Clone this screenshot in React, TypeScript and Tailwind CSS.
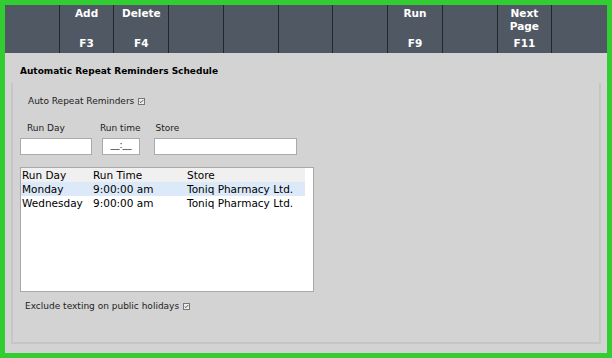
const keys = [
  { label: "", key: "" },
  { label: "Add", key: "F3" },
  { label: "Delete", key: "F4" },
  { label: "", key: "" },
  { label: "", key: "" },
  { label: "", key: "" },
  { label: "", key: "" },
  { label: "Run", key: "F9" },
  { label: "", key: "" },
  { label: "Next Page", key: "F11" },
  { label: "", key: "" },
];

const rows = [
  { day: "Monday", time: "9:00:00 am", store: "Toniq Pharmacy Ltd.", selected: true },
  { day: "Wednesday", time: "9:00:00 am", store: "Toniq Pharmacy Ltd.", selected: false },
];

function Tick() {
  return (
    <span className="ml-1 inline-flex h-[7px] w-[7px] items-center justify-center border border-[#777] bg-[#eee] align-middle">
      <svg viewBox="0 0 7 7" className="h-[5px] w-[5px]">
        <path d="M1 3.5l1.5 1.5L6 1.5" fill="none" stroke="#333" strokeWidth={1.2} />
      </svg>
    </span>
  );
}

export default function App() {
  return (
    <div
      className="h-[358px] w-[612px] bg-[#32cd32] p-[5px]"
      style={{ fontFamily: '"DejaVu Sans", Verdana, sans-serif' }}
    >
      <div className="flex h-full flex-col bg-[#d3d3d3]">
        {/* function key bar */}
        <div className="grid h-[48px] grid-cols-11 bg-[#4f5863]">
          {keys.map((k, i) => (
            <div
              key={i}
              className="flex flex-col items-center justify-between border-r border-[#22272d] pb-[3px] pt-[2px] text-[10.5px] font-bold leading-[13px] text-white last:border-r-0"
            >
              <span className="w-[40px] text-center">{k.label}</span>
              <span>{k.key}</span>
            </div>
          ))}
        </div>

        <div className="flex flex-1 flex-col px-[6px] pb-[9px] pt-[12px]">
          <div className="pl-[9px] text-[9px] font-bold text-black">
            Automatic Repeat Reminders Schedule
          </div>
          <div className="mt-[4px] flex flex-1 flex-col border-x-2 border-b-2 border-[#c6c6c6] pl-[7px] pr-[10px] text-[9px] text-[#222]">
            <div className="mt-[12px] pl-[8px]">
              Auto Repeat Reminders
              <Tick />
            </div>

            <div className="mt-[14px] flex">
              <div className="flex flex-col">
                <span className="mb-[2px] pl-[7px]">Run Day</span>
                <div className="h-[17px] w-[72px] border border-[#aaa] bg-white" />
              </div>
              <div className="ml-[10px] flex flex-col">
                <span className="-ml-[2px] mb-[2px]">Run time</span>
                <div className="flex h-[17px] w-[38px] items-center justify-center border border-[#aaa] bg-white">
                  __:__
                </div>
              </div>
              <div className="ml-[14px] flex flex-col">
                <span className="mb-[2px] pl-[1px]">Store</span>
                <div className="h-[17px] w-[143px] border border-[#aaa] bg-white" />
              </div>
            </div>

            <div className="mt-[12px] h-[125px] w-[294px] border border-[#a9a9a9] bg-white pr-[8px] text-[10.5px] leading-[14px] text-black">
              <div className="flex bg-[#f0f0f0] pl-[1px]">
                <span className="w-[71px]">Run Day</span>
                <span className="w-[94px]">Run Time</span>
                <span>Store</span>
              </div>
              {rows.map((r) => (
                <div
                  key={r.day}
                  className={`flex pl-[1px] ${r.selected ? "bg-[#dce9f8]" : ""}`}
                >
                  <span className="w-[71px]">{r.day}</span>
                  <span className="w-[94px]">{r.time}</span>
                  <span>{r.store}</span>
                </div>
              ))}
            </div>

            <div className="mt-[8px] pl-[5px]">
              Exclude texting on public holidays
              <Tick />
            </div>
          </div>
        </div>
      </div>
    </div>
  );
}
